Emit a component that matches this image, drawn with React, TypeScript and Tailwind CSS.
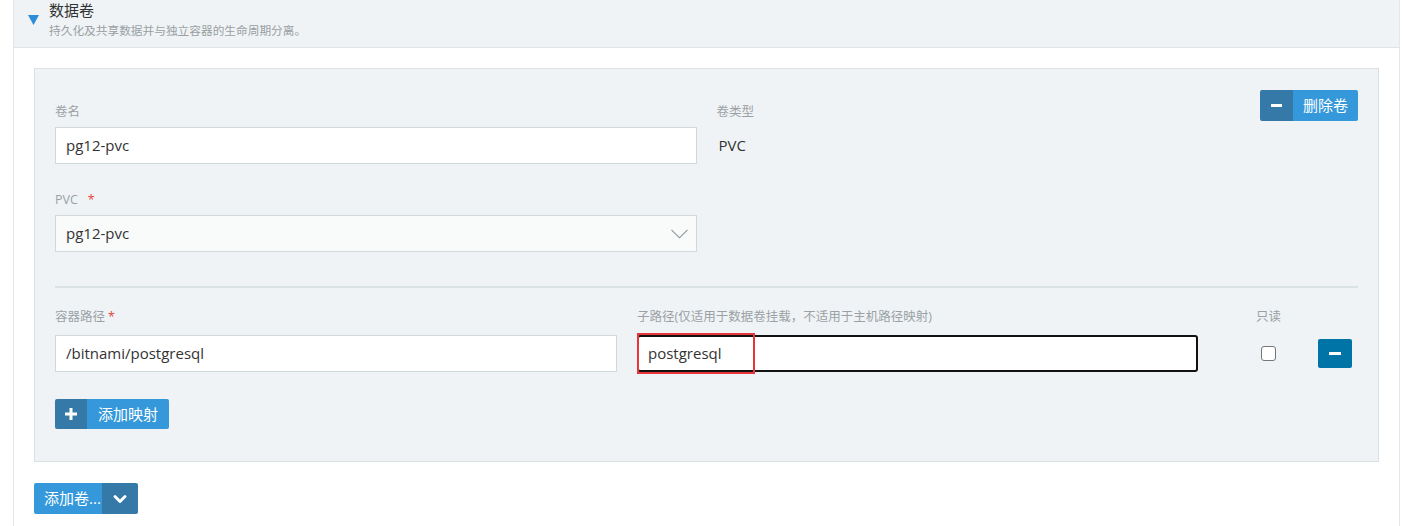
// 数据卷 编辑面板
import { ChevronDown } from 'lucide-react';

const FONT = { fontFamily: '"Open Sans", "Noto Sans CJK SC", sans-serif' };

function Label({ text, required, gap, mb }: { text: string; required?: boolean; gap?: string; mb?: string }) {
  return (
    <div className={`h-[18px] ${mb ?? 'mb-[6px]'} text-[12.5px] leading-[18px] text-[#9aa1a6] flex items-center`}>
      <span>{text}</span>
      {required && <span className={`${gap ?? 'ml-[3px]'} text-[#e8453c]`}>*</span>}
    </div>
  );
}

function TextBox({ value }: { value: string }) {
  return (
    <div className="h-[37px] bg-white border border-[#d1d9dd] flex items-center px-[10px] text-[15px] text-[#333]">
      {value}
    </div>
  );
}

export default function App() {
  return (
    <div className="min-h-screen bg-white" style={FONT}>
      <div className="ml-[13px] w-[1387px] border-x border-[#e3e7e9] min-h-[526px]">
        {/* 头部 */}
        <div className="h-[48px] bg-[#eff3f5] border-b border-[#dfe4e7] flex pl-[14px]">
          <div className="pt-[15px]">
            <svg width="11" height="10" viewBox="0 0 11 10">
              <polygon points="0,0 11,0 5.5,10" fill="#2d8bd7" />
            </svg>
          </div>
          <div className="ml-[10px]">
            <div className="text-[15px] leading-[20px] text-[#333]">数据卷</div>
            <div className="text-[11.7px] leading-[20px] text-[#999fa3]">持久化及共享数据并与独立容器的生命周期分离。</div>
          </div>
        </div>

        <div className="px-5 pt-5">
          <div className="bg-[#eff3f5] border border-[#d9e1e4] px-5 pt-5 pb-[32px]">
            <div className="grid grid-cols-2 gap-x-5">
              <div className="pt-[14px]">
                <Label text="卷名" />
                <TextBox value="pg12-pvc" />
                <div className="mt-[27px]">
                  <Label text="PVC" required gap="ml-[10px]" />
                  <div className="h-[37px] bg-[#f9fbfb] border border-[#d1d9dd] flex items-center justify-between pl-[10px] pr-[8px] text-[15px] text-[#333]">
                    <span>pg12-pvc</span>
                    <svg width="17" height="10" viewBox="0 0 17 10">
                      <polyline points="0.5,0.8 8.5,8.8 16.5,0.8" fill="none" stroke="#8b9296" strokeWidth="1.1" />
                    </svg>
                  </div>
                </div>
              </div>
              <div className="flex justify-between">
                <div className="pt-[14px]">
                  <Label text="卷类型" />
                  <div className="h-[37px] flex items-center pl-[2px] text-[15px] text-[#333]">PVC</div>
                </div>
                <div>
                  <div className="inline-flex h-[31px] rounded-[2px] overflow-hidden text-white text-[15px]">
                    <span className="bg-[#3579a8] w-[33px] flex items-center justify-center">
                      <span className="block w-[11px] h-[3px] bg-white" />
                    </span>
                    <span className="bg-[#3498db] px-[10px] flex items-center">删除卷</span>
                  </div>
                </div>
              </div>
            </div>

            <div className="mt-[34px] h-[2px] bg-[#dce3e4]" />

            <div className="flex mt-[20px]">
              <div className="w-[562px]">
                <Label text="容器路径" required mb="mb-[9px]" />
                <TextBox value="/bitnami/postgresql" />
              </div>
              <div className="w-[561px] ml-5">
                <Label text="子路径(仅适用于数据卷挂载，不适用于主机路径映射)" mb="mb-[9px]" />
                <div className="relative">
                  <div className="h-[37px] bg-white border-2 border-[#111] rounded-[3px] flex items-center px-[9px] text-[15px] text-[#333]">
                    postgresql
                  </div>
                  <div className="absolute left-0 top-[-2px] w-[118px] h-[41px] border-2 border-[#e8353a]" />
                </div>
              </div>
              <div className="ml-[58px] w-[40px]">
                <Label text="只读" mb="mb-[9px]" />
                <div className="h-[37px] flex items-center">
                  <span className="ml-[5px] block w-[15px] h-[15px] bg-white border border-[#767676] rounded-[3px]" />
                </div>
              </div>
              <div className="ml-[22px] pt-[31px]">
                <div className="w-[34px] h-[29px] bg-[#0074a6] rounded-[2px] flex items-center justify-center">
                  <span className="block w-[12px] h-[3px] bg-white" />
                </div>
              </div>
            </div>

            <div className="mt-[27px]">
              <div className="inline-flex h-[30px] rounded-[2px] overflow-hidden text-white text-[15px]">
                <span className="bg-[#3579a8] w-[32px] flex items-center justify-center">
                  <svg width="12" height="12" viewBox="0 0 12 12">
                    <rect x="4.5" y="0" width="3" height="12" fill="#fff" />
                    <rect x="0" y="4.5" width="12" height="3" fill="#fff" />
                  </svg>
                </span>
                <span className="bg-[#3498db] px-[11px] flex items-center">添加映射</span>
              </div>
            </div>
          </div>

          <div className="mt-[21px]">
            <div className="inline-flex h-[31px] rounded-[2px] overflow-hidden text-white text-[15px]">
              <span className="bg-[#3498db] pl-[10px] pr-[1px] flex items-center">添加卷...</span>
              <span className="bg-[#3579a8] w-[36px] flex items-center justify-center">
                <ChevronDown size={20} strokeWidth={3.5} color="#fff" />
              </span>
            </div>
          </div>
        </div>
      </div>
    </div>
  );
}
